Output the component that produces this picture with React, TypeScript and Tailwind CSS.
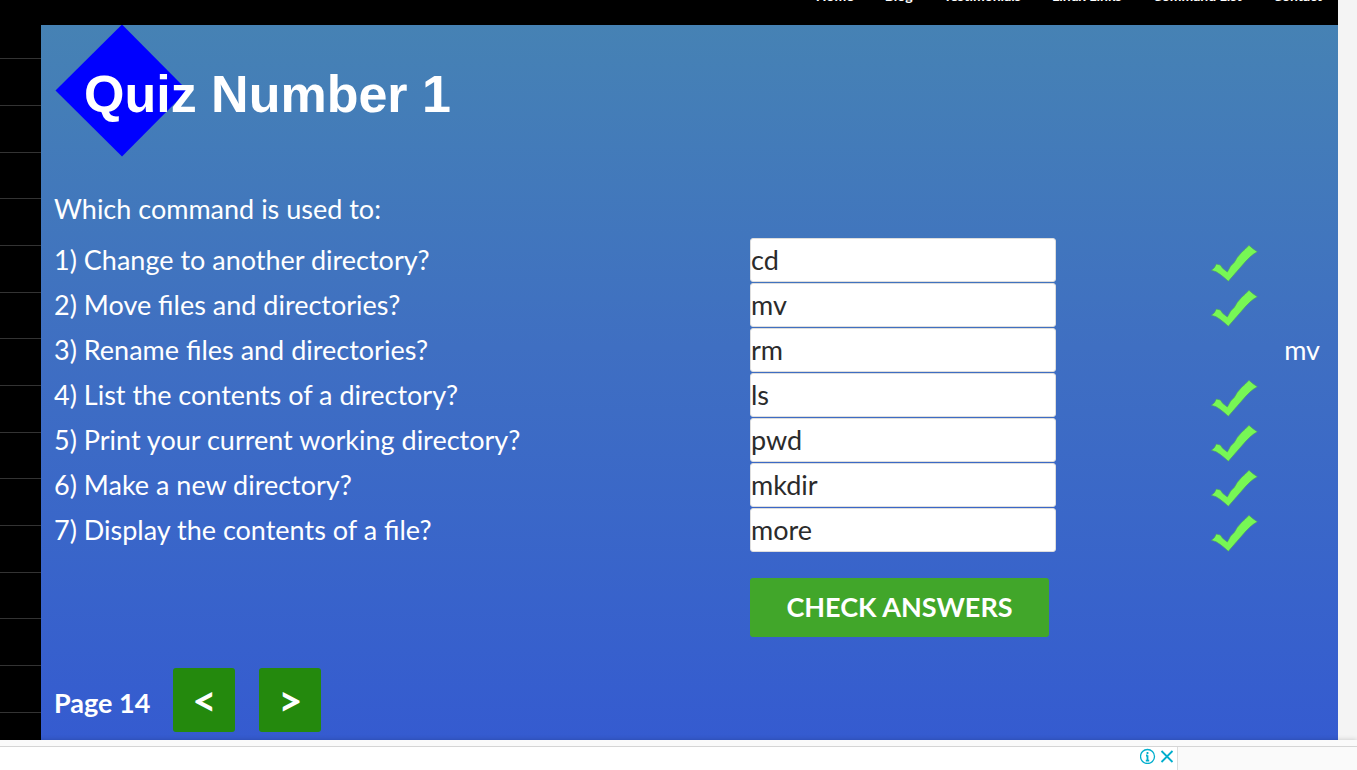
import { useState } from "react";

const links = ["Home", "Blog", "Testimonials", "Linux Links", "Command List", "Contact"];

type Question = { text: string; given: string; answer: string };

const questions: Question[] = [
  { text: "Change to another directory?", given: "cd", answer: "cd" },
  { text: "Move files and directories?", given: "mv", answer: "mv" },
  { text: "Rename files and directories?", given: "rm", answer: "mv" },
  { text: "List the contents of a directory?", given: "ls", answer: "ls" },
  { text: "Print your current working directory?", given: "pwd", answer: "pwd" },
  { text: "Make a new directory?", given: "mkdir", answer: "mkdir" },
  { text: "Display the contents of a file?", given: "more", answer: "more" },
];

function Tick() {
  return (
    <svg viewBox="60 42 144 114" className="mt-[6px] ml-auto block h-[38px] w-12" role="img" aria-label="Correct">
      <path
        d="M64 121 L73 113 L79 102 L91 105 L98 115 L112 126 L122 108 L133 97 L142 82 L155 67 L165 58 L177 46 L189 56 L202 65 L190 73 L180 81 L168 93 L155 108 L140 125 L128 139 L115 154 L103 143 L90 133 L78 125 Z"
        fill="#77f755"
        stroke="#4d9c6a"
        strokeWidth="2"
        strokeLinejoin="round"
      />
    </svg>
  );
}

export default function App() {
  const [given, setGiven] = useState(questions.map((q) => q.given));
  const [checked, setChecked] = useState(given);

  return (
    <div className="flex h-screen flex-col overflow-hidden bg-[#f4f4f4] font-['Lato',sans-serif]">
      <div className="mr-[19px] flex min-h-0 flex-1 flex-col overflow-hidden bg-black bg-[repeating-linear-gradient(to_bottom,transparent_0px_12px,#333_12px_13px,transparent_13px_58px,#333_58px_59px,transparent_59px_105px,#333_105px_106px,transparent_106px_140px)]">
        <header className="-mt-[14px] flex h-[39px] shrink-0 items-start justify-end bg-black pr-4">
          <nav className="flex gap-[31px] text-[14px] leading-5 font-bold text-white">
            {links.map((l) => (
              <a key={l} href="#">
                {l}
              </a>
            ))}
          </nav>
        </header>

        <main className="ml-[41px] flex-1 bg-linear-to-b from-[#4682b4] via-[#3f6fc2] via-45% to-[#355bd0] pr-[18px] pl-[13px] text-[27px] leading-[34px] text-white">
          <h1 className="grid items-center">
            <svg viewBox="0 0 136 132" className="col-start-1 row-start-1 h-[132px] w-[136px]" aria-hidden="true">
              <path d="M68 -0.5 L133.5 65.5 L68 131.5 L1.5 65.5 Z" fill="#0000ff" />
            </svg>
            <span className="col-start-1 row-start-1 pt-[6px] pl-[30px] font-['Liberation_Sans',sans-serif] text-[52px] leading-[60px] font-bold">
              Quiz Number 1
            </span>
          </h1>

          <p className="mt-[35px]">Which command is used to:</p>

          <form
            onSubmit={(e) => {
              e.preventDefault();
              setChecked(given);
            }}
          >
            <table className="mt-[11px] w-full table-fixed">
              <colgroup>
                <col />
                <col className="w-[306px]" />
                <col className="w-[202px]" />
                <col className="w-[62px]" />
              </colgroup>
              <tbody>
                {questions.map((q, i) => (
                  <tr key={q.text} className="h-[45px]">
                    <td className="p-0">
                      <label htmlFor={`answer-${i}`}>
                        {i + 1}) {q.text}
                      </label>
                    </td>
                    <td className="p-0">
                      <input
                        id={`answer-${i}`}
                        type="text"
                        value={given[i]}
                        onChange={(e) => setGiven(given.map((g, n) => (n === i ? e.target.value : g)))}
                        className="block h-11 w-full rounded-[3px] border border-[#ddd] bg-white text-[#2b2b2b]"
                      />
                    </td>
                    <td className="p-0">{checked[i] === q.answer && <Tick />}</td>
                    <td className="p-0 text-right">{checked[i] !== q.answer && q.answer}</td>
                  </tr>
                ))}
              </tbody>
            </table>
            <div className="mt-[26px] flex justify-end pr-[264px]">
              <div className="w-[306px]">
                <button
                  type="submit"
                  className="h-[59px] w-[299px] rounded-[3px] bg-[#41a62a] pb-[2px] font-bold uppercase"
                >
                  Check answers
                </button>
              </div>
            </div>
          </form>

          <div className="mt-[31px] flex items-center font-bold">
            <span className="mr-[23px] pt-[6px]">Page 14</span>
            <div className="flex gap-6">
              <button aria-label="Previous page" className="h-16 w-[62px] rounded-[3px] bg-[#24890d] text-[42px]">
                &lt;
              </button>
              <button aria-label="Next page" className="h-16 w-[62px] rounded-[3px] bg-[#24890d] text-[42px]">
                &gt;
              </button>
            </div>
          </div>
        </main>
      </div>

      <aside className="z-10 flex h-[30px] shrink-0 flex-col bg-[#fafafa] pt-[6px] shadow-[0_0_5px_rgba(0,0,0,0.2)]">
        <div className="flex flex-1 border-t border-[#d5d5d5]">
          <div className="mr-[179px] flex flex-1 items-start justify-end gap-1 border-r border-[#ddd] bg-white pt-px pr-[3px] text-[#00aecd]">
            <button aria-label="Ad information">
              <svg viewBox="0 0 16 16" className="size-4" fill="none" stroke="currentColor">
                <circle cx="7.5" cy="8.5" r="7" strokeWidth="1.3" />
                <path d="M7.5 4 V6 M7.5 7.2 V13 M6 7.5 H7.5 M5.8 12.6 H9.2" strokeWidth="1.8" />
              </svg>
            </button>
            <button aria-label="Close ad">
              <svg viewBox="0 0 14 16" className="h-4 w-[14px]" fill="none" stroke="currentColor" strokeWidth="1.8">
                <path d="M1.5 3 L12.5 14 M12.5 3 L1.5 14" />
              </svg>
            </button>
          </div>
        </div>
      </aside>
    </div>
  );
}
